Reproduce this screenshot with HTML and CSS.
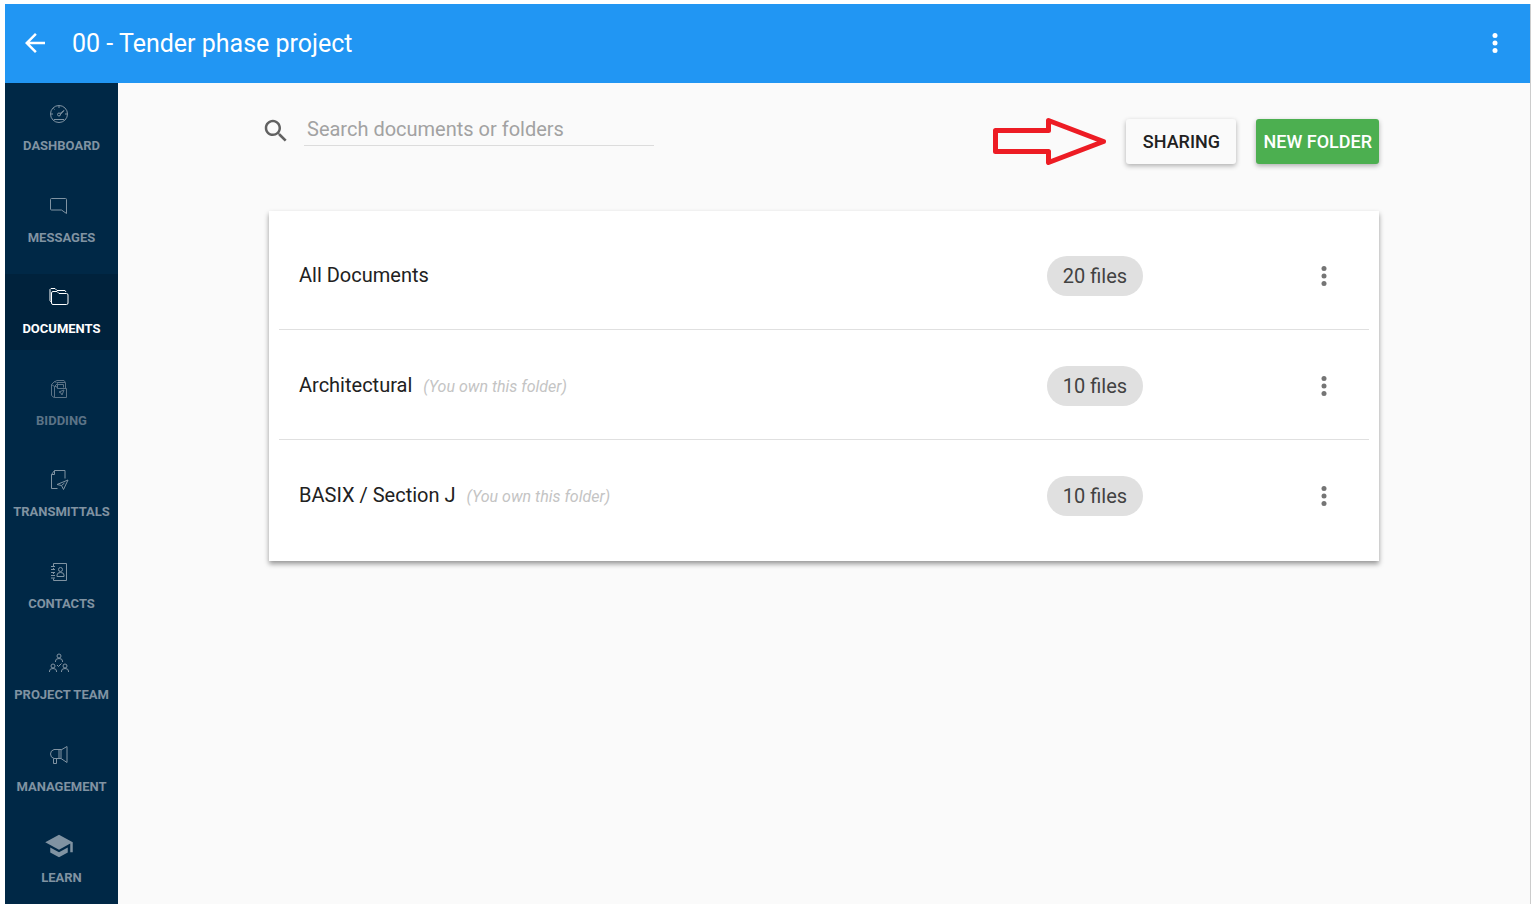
FILE: index.html
```
<!DOCTYPE html>
<html lang="en">
<head>
  <meta charset="UTF-8" />
  <meta name="viewport" content="width=device-width, initial-scale=1" />
  <title>00 - Tender phase project</title>
  <link rel="stylesheet" href="styles.css">
</head>
<body>
  <svg class="sprite" aria-hidden="true">
    <symbol id="more" viewBox="0 0 24 24">
      <circle cx="12" cy="6" r="2"/><circle cx="12" cy="12" r="2"/><circle cx="12" cy="18" r="2"/>
    </symbol>
  </svg>

  <div class="app">
    <header class="topbar">
      <button class="icon-btn" aria-label="Back">
        <svg viewBox="0 0 24 24"><path d="M20 11H7.83l5.59-5.59L12 4l-8 8 8 8 1.41-1.41L7.83 13H20z"/></svg>
      </button>
      <h1>00 - Tender phase project</h1>
      <button class="icon-btn" aria-label="Project menu"><svg><use href="#more"/></svg></button>
    </header>

    <div class="body">
      <nav class="sidebar">
        <a href="#" class="nav-item">
          <svg viewBox="0 0 20 20"><circle cx="10" cy="10" r="8.5"/><path d="M10 2v2M2 10h2M16 10h2M4.5 4.5l1 1M5 15.5h10M11 9.5l4-3M10.5 11.5l4.5-5"/><circle cx="10" cy="10.5" r="1.5"/></svg>
          <span>DASHBOARD</span>
        </a>
        <a href="#" class="nav-item">
          <svg viewBox="0 0 20 20"><path d="M2.5 2.5h14q1 0 1 1v14l-5-3.500h-10q-1 0-1-1v-9.500q0-1 1-1z"/></svg>
          <span>MESSAGES</span>
        </a>
        <a href="#" class="nav-item active">
          <svg viewBox="0 0 20 20"><path d="M2.5 15.5l-1.500-2v-11l1-1h4l2 2h8l1 1.500M4 17.500q-1.500 0-1.500-1.500v-10q0-1.500 1.500-1.500h4l2 2h7.500q1.500 0 1.500 1.500v8q0 1.500-1.500 1.500z"/></svg>
          <span>DOCUMENTS</span>
        </a>
        <a href="#" class="nav-item disabled">
          <svg viewBox="0 0 20 20"><path d="M5 18.5l-2.500-2v-11l3 2v11zM2.500 5.500l3-3 2 1M5.500 7.500l3-3v5M5 3l3-1.500h7l1.500 2v5.500M8 3.500h8M8.500 5.500h6v3M5.500 18.500h12v-9h-9l-1-2h-2M10 13l5-2-2 5-1-2z"/></svg>
          <span>BIDDING</span>
        </a>
        <a href="#" class="nav-item">
          <svg viewBox="0 0 20 20"><path d="M8.5 18.5h-6v-14l3-4h10.500v8M2.500 4.500h3v-4M19 10l-11 4.500 4.500 1 2 4zM12.500 15.500l3-2.500"/></svg>
          <span>TRANSMITTALS</span>
        </a>
        <a href="#" class="nav-item">
          <svg viewBox="0 0 20 20"><path d="M4.5 4v-2.500h13v17h-13v-2M4.500 6v2M4.500 10v2M2 4.500h4M2 7.500h4M2 10.500h4M2 13.500h4M2 16h4M8 14.500v-1.500q0-2.500 3.500-2.500t3.500 2.500v1.500z"/><circle cx="11.5" cy="7.5" r="2"/></svg>
          <span>CONTACTS</span>
        </a>
        <a href="#" class="nav-item">
          <svg viewBox="0 0 20 20"><circle cx="10" cy="3" r="2"/><circle cx="4" cy="13" r="2"/><circle cx="16" cy="13" r="2"/><path d="M6.5 9v-1q0-2.500 3.500-2.500t3.500 2.500v1M.5 19v-1q0-2.500 3.500-2.500t3.500 2.500v1M12.500 19v-1q0-2.500 3.500-2.500t3.500 2.500v1M8 12l1.500 1.500 3-3"/></svg>
          <span>PROJECT TEAM</span>
        </a>
        <a href="#" class="nav-item">
          <svg viewBox="0 0 20 20"><path d="M12 4.5h-7q-3.500 1-3.500 4.500t3.500 4.500h7zM10 4.500v9M12 5l6-3.500v16l-6-4M4.500 13.500v5h3v-5"/></svg>
          <span>MANAGEMENT</span>
        </a>
        <a href="#" class="nav-item">
          <svg class="solid" viewBox="0 0 24 24"><path d="M5 13.180v4L12 21l7-3.820v-4L12 17l-7-3.820zM12 3L1 9l11 6 9-4.910V17h2V9L12 3z"/></svg>
          <span>LEARN</span>
        </a>
      </nav>

      <main class="content">
        <div class="toolbar">
          <label class="search">
            <svg viewBox="0 0 24 24" role="img" aria-label="Search"><path d="M15.500 14h-.79l-.28-.27C15.410 12.590 16 11.110 16 9.500 16 5.910 13.090 3 9.500 3S3 5.910 3 9.500 5.910 16 9.500 16c1.610 0 3.090-.59 4.230-1.570l.27.28v.79l5 4.990L20.490 19l-4.990-5zm-6 0C7.010 14 5 11.990 5 9.500S7.010 5 9.500 5 14 7.010 14 9.500 11.990 14 9.500 14z"/></svg>
            <input type="text" placeholder="Search documents or folders">
          </label>
          <svg class="pointer" viewBox="0 0 113 47" aria-hidden="true"><path d="M2.500 12.500h53v-10l55 21-55 21v-11h-53z"/></svg>
          <button class="btn">SHARING</button>
          <button class="btn btn-green">NEW FOLDER</button>
        </div>

        <ul class="folders">
          <li class="folder">
            <div class="folder-name">All Documents</div>
            <span class="count">20 files</span>
            <button class="icon-btn" aria-label="All Documents menu"><svg><use href="#more"/></svg></button>
          </li>
          <li class="folder">
            <div class="folder-name">Architectural <em>(You own this folder)</em></div>
            <span class="count">10 files</span>
            <button class="icon-btn" aria-label="Architectural menu"><svg><use href="#more"/></svg></button>
          </li>
          <li class="folder">
            <div class="folder-name">BASIX / Section J <em>(You own this folder)</em></div>
            <span class="count">10 files</span>
            <button class="icon-btn" aria-label="BASIX / Section J menu"><svg><use href="#more"/></svg></button>
          </li>
        </ul>
      </main>
    </div>
  </div>
</body>
</html>
```
FILE: styles.css
```
* {
  box-sizing: border-box;
}
body {
  margin: 0;
  padding: 4px 0 4px 5px;
  min-height: 100vh;
  display: flex;
  background: #fff;
  font-family: Roboto, sans-serif;
  color: #212121;
}
.sprite {
  position: absolute;
  width: 0;
  height: 0;
}
.app {
  flex: 1;
  display: flex;
  flex-direction: column;
  border-right: 1px solid #ccc;
  background: #fafafa;
}
button {
  font-family: inherit;
  border: none;
  cursor: pointer;
}
.icon-btn {
  width: 30px;
  height: 30px;
  padding: 0;
  background: none;
  color: #757575;
}
.icon-btn svg {
  display: block;
  width: 30px;
  height: 30px;
  fill: currentColor;
}

/* Top bar */
.topbar {
  display: flex;
  align-items: center;
  height: 79px;
  padding: 0 20px 1px 15px;
  background: #2196f3;
}
.topbar h1 {
  flex: 1;
  margin: 0 0 0 22px;
  font-size: 25px;
  font-weight: 400;
  color: #fff;
}
.topbar .icon-btn {
  color: #fff;
}

/* Side navigation */
.body {
  flex: 1;
  display: flex;
}
.sidebar {
  flex: none;
  width: 113px;
  padding: 8px 0 5px;
  display: flex;
  flex-direction: column;
  justify-content: space-between;
  background: #002846;
}
.nav-item {
  height: 76px;
  padding-top: 7px;
  display: flex;
  flex-direction: column;
  align-items: center;
  gap: 8px;
  font-size: 13px;
  font-weight: 700;
  line-height: 16px;
  color: #8093a2;
  text-decoration: none;
  white-space: nowrap;
}
.nav-item svg {
  width: 32px;
  height: 32px;
  padding: 6px;
  margin-right: 6px;
  fill: none;
  stroke: currentColor;
  stroke-width: 1;
}
.nav-item .solid {
  padding: 1px;
  fill: currentColor;
  stroke: none;
}
.nav-item.active {
  background: #00223c;
  color: #fff;
}
.nav-item.disabled {
  color: #5c7386;
}

/* Content */
.content {
  flex: 1;
  padding: 31px 40px;
}
.toolbar {
  display: flex;
  align-items: center;
  gap: 20px;
  max-width: 1110px;
  height: 55px;
  margin: 0 auto 42px;
}
.search {
  flex: 1;
  align-self: flex-start;
  display: flex;
  align-items: flex-end;
  gap: 13px;
  margin-left: -8px;
}
.search svg {
  flex: none;
  width: 30px;
  height: 30px;
  fill: #616161;
}
.search input {
  width: 350px;
  height: 32px;
  padding: 0 3px 2px;
  border: none;
  border-bottom: 1px solid #dcdcdc;
  outline: none;
  background: none;
  font-family: inherit;
  font-size: 20px;
  color: #212121;
}
.search input::placeholder {
  color: #a2a2a2;
}
.pointer {
  width: 113px;
  height: 47px;
  fill: none;
  stroke: #ed1c24;
  stroke-width: 5;
  stroke-linejoin: round;
}
.btn {
  height: 45px;
  min-width: 110px;
  padding: 0 7px;
  border-radius: 3px;
  background: #fafafa;
  box-shadow: 0 2px 5px rgba(0, 0, 0, 0.3);
  font-size: 18px;
  font-weight: 500;
  color: #212121;
}
.btn-green {
  background: #4caf50;
  color: #fff;
}

/* Folder list */
.folders {
  list-style: none;
  max-width: 1110px;
  margin: 0 auto;
  padding: 9px 10px 11px;
  background: #fff;
  box-shadow: 0 3px 5px rgba(0, 0, 0, 0.4);
}
.folder {
  display: grid;
  grid-template-columns: 1fr 262px 30px;
  align-items: center;
  height: 110px;
  padding: 2px 30px 0 20px;
  border-bottom: 1px solid #e0e0e0;
  font-size: 20px;
}
.folder:last-child {
  border-bottom-color: transparent;
}
.folder-name {
  padding-bottom: 2px;
}
.folder-name em {
  margin-left: 6px;
  font-size: 16px;
  color: #c4c4c4;
}
.count {
  justify-self: start;
  min-width: 96px;
  padding: 0 15px;
  border-radius: 20px;
  background: #e0e0e0;
  line-height: 40px;
  text-align: center;
  color: #424242;
}
```
